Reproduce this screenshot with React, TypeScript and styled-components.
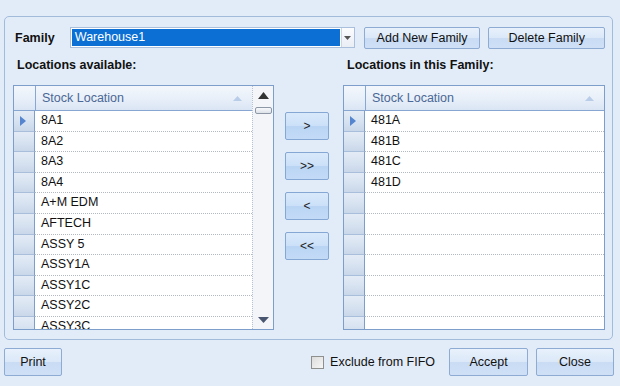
import styled, { createGlobalStyle } from "styled-components";

const GlobalStyle = createGlobalStyle`
  html, body {
    margin: 0;
    padding: 0;
    background: #e2ecf8;
  }
  body {
    font-family: "Liberation Sans", Arial, sans-serif;
    font-size: 12px;
    color: #111111;
  }
`;

const available = [
  "8A1",
  "8A2",
  "8A3",
  "8A4",
  "A+M EDM",
  "AFTECH",
  "ASSY 5",
  "ASSY1A",
  "ASSY1C",
  "ASSY2C",
  "ASSY3C",
];

const inFamily = ["481A", "481B", "481C", "481D"];

const ROW_COUNT = 11;

interface GridProps {
  rows: string[];
  withScroll?: boolean;
}

// grid like a winforms DataGridView: row headers + one column
const LocationGrid = ({ rows, withScroll }: GridProps) => {
  const cells = Array.from({ length: ROW_COUNT }, (_, i) => rows[i] ?? "");
  return (
    <GridFrame>
      <GridBody>
        <HeaderRow>
          <CornerCell />
          <HeaderCell>
            Stock Location
            <SortGlyph viewBox="0 0 9 5">
              <path d="M0 5 L4.5 0 L9 5 Z" fill="#b9cde8" />
            </SortGlyph>
          </HeaderCell>
        </HeaderRow>
        {cells.map((value, i) => (
          <DataRow key={i}>
            <RowHeader>
              {i === 0 && (
                <svg width="6" height="10" viewBox="0 0 6 10">
                  <path d="M0 0 L6 5 L0 10 Z" fill="#5585cf" />
                </svg>
              )}
            </RowHeader>
            <DataCell>{value}</DataCell>
          </DataRow>
        ))}
      </GridBody>
      {withScroll && (
        <ScrollTrack>
          <svg width="11" height="7" viewBox="0 0 11 7">
            <path d="M0 7 L5.5 0 L11 7 Z" fill="#333333" />
          </svg>
          <Thumb />
          <ScrollSpacer />
          <svg width="11" height="6" viewBox="0 0 11 6">
            <path d="M0 0 L5.5 6 L11 0 Z" fill="#4a5670" />
          </svg>
        </ScrollTrack>
      )}
    </GridFrame>
  );
};

export default function App() {
  return (
    <>
      <GlobalStyle />
      <Page>
        <GroupBox>
          <TopRow>
            <FamilyLabel>Family</FamilyLabel>
            <Combo>
              <ComboValue>Warehouse1</ComboValue>
              <ComboArrow>
                <svg width="7" height="4" viewBox="0 0 7 4">
                  <path d="M0 0 L7 0 L3.5 4 Z" fill="#555555" />
                </svg>
              </ComboArrow>
            </Combo>
            <Button $width={117}>Add New Family</Button>
            <Button $width={117}>Delete Family</Button>
          </TopRow>
          <Columns>
            <ListColumn $width={261}>
              <SectionTitle>Locations available:</SectionTitle>
              <LocationGrid rows={available} withScroll />
            </ListColumn>
            <MoveColumn>
              <MoveButton>&gt;</MoveButton>
              <MoveButton>&gt;&gt;</MoveButton>
              <MoveButton>&lt;</MoveButton>
              <MoveButton>&lt;&lt;</MoveButton>
            </MoveColumn>
            <ListColumn $width={262}>
              <SectionTitle>Locations in this Family:</SectionTitle>
              <LocationGrid rows={inFamily} />
            </ListColumn>
          </Columns>
        </GroupBox>
        <BottomRow>
          <Button $width={58} $height={28}>Print</Button>
          <Spacer />
          <CheckLabel>
            <CheckBox />
            Exclude from FIFO
          </CheckLabel>
          <Button $width={79} $height={28}>Accept</Button>
          <Button $width={78} $height={28}>Close</Button>
        </BottomRow>
      </Page>
    </>
  );
}

const Page = styled.div`
  width: 620px;
  height: 386px;
  box-sizing: border-box;
  padding: 16px 6px 0 4px;
  display: flex;
  flex-direction: column;
  background: #e2ecf8;
`;

const GroupBox = styled.section`
  width: 609px;
  height: 324px;
  box-sizing: border-box;
  border: 1px solid #a3bbdb;
  border-radius: 5px;
  padding: 10px 7px 0 8px;
  display: flex;
  flex-direction: column;
`;

const TopRow = styled.div`
  display: flex;
  align-items: center;
  height: 21px;
`;

const FamilyLabel = styled.span`
  font-weight: bold;
  font-size: 12.5px;
  margin-left: 2px;
  width: 55px;
`;

const Combo = styled.div`
  width: 286px;
  height: 21px;
  box-sizing: border-box;
  border: 1px solid #a9bfdc;
  background: #ffffff;
  display: flex;
  margin-right: 9px;
`;

const ComboValue = styled.div`
  flex: 1;
  margin: 1px;
  background: #0c6fd4;
  color: #ffffff;
  font-size: 12.5px;
  line-height: 17px;
  padding-left: 3px;
`;

const ComboArrow = styled.div`
  width: 12px;
  display: flex;
  align-items: center;
  justify-content: center;
  background: linear-gradient(#fbfcfe, #e9eef5);
  border-left: 1px solid #c9d6e8;
`;

const Button = styled.button<{ $width: number; $height?: number }>`
  width: ${(p) => p.$width}px;
  height: ${(p) => p.$height ?? 22}px;
  box-sizing: border-box;
  margin-right: 8px;
  padding: 0;
  border: 1px solid #8dabd3;
  border-radius: 2px;
  background: linear-gradient(#e8f1fc 0%, #dbe8f8 50%, #c9dcf4 51%, #cfe0f6 100%);
  font-family: "Liberation Sans", Arial, sans-serif;
  font-size: 12.5px;
  color: #111111;
  &:last-child {
    margin-right: 0;
  }
`;

const Columns = styled.div`
  display: flex;
  margin-top: 7px;
`;

const ListColumn = styled.div<{ $width: number }>`
  width: ${(p) => p.$width}px;
  display: flex;
  flex-direction: column;
`;

const SectionTitle = styled.div`
  font-weight: bold;
  font-size: 12.5px;
  line-height: 20px;
  padding-left: 4px;
  margin-bottom: 10px;
`;

const MoveColumn = styled.div`
  width: 44px;
  margin: 0 14px 0 11px;
  padding-top: 57px;
  display: flex;
  flex-direction: column;
  gap: 12px;
`;

const MoveButton = styled.button`
  width: 44px;
  height: 28px;
  padding: 0;
  border: 1px solid #85a7d3;
  border-radius: 2px;
  background: linear-gradient(#d9e9fb 0%, #cbe0f8 50%, #b9d4f4 51%, #c4dbf7 100%);
  font-family: "Liberation Sans", Arial, sans-serif;
  font-size: 12px;
  color: #222222;
`;

const GridFrame = styled.div`
  height: 245px;
  box-sizing: border-box;
  border: 1px solid #7d9dcb;
  background: #ffffff;
  display: flex;
  overflow: hidden;
`;

const GridBody = styled.div`
  flex: 1;
  display: flex;
  flex-direction: column;
  min-width: 0;
`;

const HeaderRow = styled.div`
  display: flex;
  height: 24px;
  flex-shrink: 0;
  border-bottom: 1px solid #87a6d2;
  background: linear-gradient(#f3f7fc 0%, #e9f0f9 50%, #dae5f4 100%);
`;

const CornerCell = styled.div`
  width: 21px;
  border-right: 1px solid #87a6d2;
`;

const HeaderCell = styled.div`
  flex: 1;
  display: flex;
  align-items: center;
  padding-left: 6px;
  padding-right: 10px;
  color: #4b6896;
  font-size: 12.5px;
  justify-content: space-between;
`;

const SortGlyph = styled.svg`
  width: 9px;
  height: 5px;
`;

const DataRow = styled.div`
  display: flex;
  height: 20.6px;
  flex-shrink: 0;
`;

const RowHeader = styled.div`
  width: 21px;
  box-sizing: border-box;
  border-right: 1px solid #7d9dcb;
  border-bottom: 1px solid #a9bedb;
  background: linear-gradient(#e3ebf6 0%, #d8e3f1 50%, #c9d7ea 100%);
  display: flex;
  align-items: center;
  padding-left: 6px;
`;

const DataCell = styled.div`
  flex: 1;
  box-sizing: border-box;
  border-bottom: 1px dotted #b4b8c0;
  padding-left: 6px;
  font-size: 12.5px;
  line-height: 19px;
  white-space: nowrap;
`;

const ScrollTrack = styled.div`
  width: 21px;
  flex-shrink: 0;
  box-sizing: border-box;
  border-left: 1px dotted #b7c3d4;
  background: #f3f5f9;
  display: flex;
  flex-direction: column;
  align-items: center;
  padding: 6px 0 6px;
`;

const Thumb = styled.div`
  width: 17px;
  height: 7px;
  box-sizing: border-box;
  margin-top: 8px;
  border: 1px solid #8d97a6;
  border-radius: 2px;
  background: linear-gradient(#f8f9fb, #dde2ea);
`;

const ScrollSpacer = styled.div`
  flex: 1;
`;

const BottomRow = styled.div`
  display: flex;
  align-items: center;
  margin-top: 8px;
`;

const Spacer = styled.div`
  flex: 1;
`;

const CheckLabel = styled.label`
  display: flex;
  align-items: center;
  gap: 6px;
  font-size: 12.5px;
  margin-right: 14px;
`;

const CheckBox = styled.span`
  width: 13px;
  height: 13px;
  box-sizing: border-box;
  border: 1px solid #8e8f8f;
  background: linear-gradient(135deg, #dcdcdc, #f6f6f6);
`;
